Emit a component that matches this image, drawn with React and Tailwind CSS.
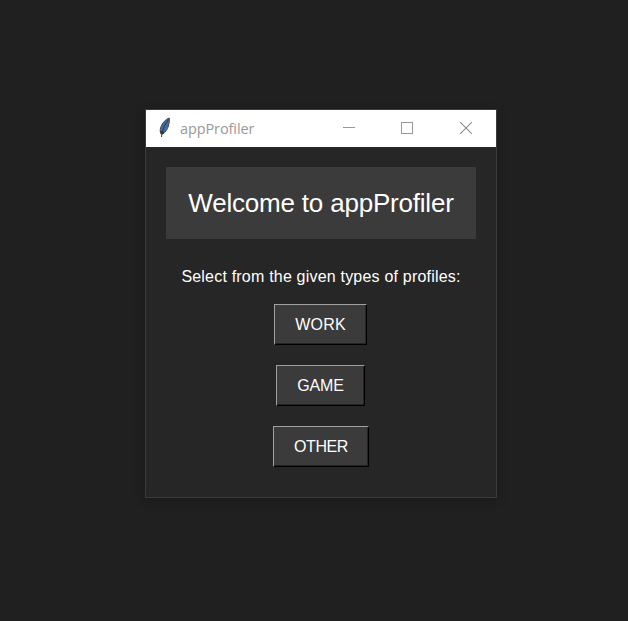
const profiles = [
  { label: 'WORK', size: 'mr-px w-[93px] tracking-[0.2px]' },
  { label: 'GAME', size: 'mr-px w-[89px] tracking-[-0.1px]' },
  { label: 'OTHER', size: 'w-24 tracking-[-0.4px]' },
];

function FeatherIcon() {
  return (
    <svg width="14" height="22" viewBox="0 0 14 22" className="-mt-px" aria-hidden="true">
      <path d="M11.300 1C7.800 2 4 6.200 2.600 10.800c-.6 2.200-.5 4.200.3 6l1.800.2c2.600-1.600 4.700-4.500 5.700-8 .8-2.800 1.100-5.400.9-8z" fill="#426dab" stroke="#4a4a4c" strokeWidth="1" />
      <path d="M10.600 2.500C7.800 6 5.200 10.500 4 16" fill="none" stroke="#24344f" strokeWidth="1" />
      <path d="M2.300 13.500l.5 3.200 1.900.6 1.800-2z" fill="#2c2f35" />
      <path d="M4 15L3.500 20" stroke="#4b423b" strokeWidth="1" />
    </svg>
  );
}

function TitleBar() {
  return (
    <header className="flex h-[37px] items-center bg-white pl-3">
      <FeatherIcon />
      <span className="ml-2 font-['Open_Sans','Noto_Sans',sans-serif] text-[14.5px] leading-5 tracking-[-0.1px] text-[#999999]">appProfiler</span>
      <div className="ml-auto flex h-full items-start pr-6 pt-3">
        <svg className="mr-[46px]" width="12" height="12" viewBox="0 0 12 12" shapeRendering="crispEdges"><path d="M0 5.500H12" stroke="#999" /></svg>
        <svg className="mr-[47px]" width="12" height="12" viewBox="0 0 12 12" shapeRendering="crispEdges"><rect x=".5" y=".5" width="11" height="11" fill="none" stroke="#999" /></svg>
        <svg width="12" height="12" viewBox="0 0 12 12"><path d="M0 0L12 12M12 0L0 12" stroke="#8c8c8c" strokeWidth="1.1" /></svg>
      </div>
    </header>
  );
}

export default function App() {
  return (
    <div className="h-[621px] w-[628px] bg-[#202020] pl-[145px] pt-[109px] font-['Liberation_Sans',Arial,sans-serif] text-white">
      <div className="flex h-[389px] w-[352px] flex-col border border-[#3b3b3b] bg-[#262626] shadow-[0_2px_10px_rgba(0,0,0,0.25)]">
        <TitleBar />
        <main className="flex flex-col items-center px-5 pt-5">
          <h1 className="flex h-[72px] w-full items-center justify-center whitespace-nowrap bg-[#3b3b3b] text-[26px] leading-8 tracking-[-0.2px]">Welcome to appProfiler</h1>
          <p className="mt-7 whitespace-nowrap text-base leading-5 tracking-[0.2px]">Select from the given types of profiles:</p>
          <div className="mt-[17px] flex flex-col items-center gap-5">
            {profiles.map(({ label, size }) => (
              <button key={label} className={`${size} h-[41px] border border-b-black border-l-[#a0a0a0] border-r-black border-t-[#a0a0a0] bg-[#3b3b3b] text-base leading-5 shadow-[inset_-1px_-1px_0_#242424]`}>
                {label}
              </button>
            ))}
          </div>
        </main>
      </div>
    </div>
  );
}
